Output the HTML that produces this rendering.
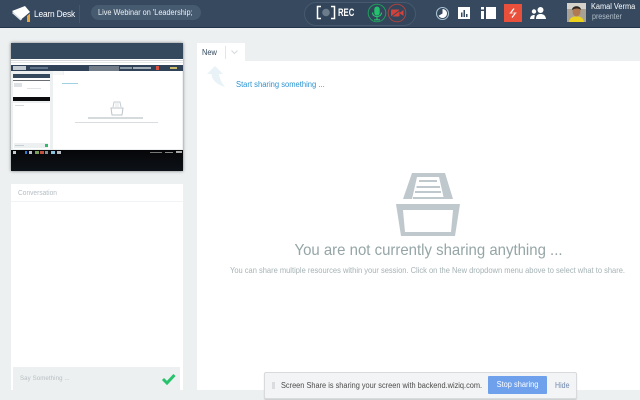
<!DOCTYPE html>
<html><head><meta charset="utf-8">
<style>
html,body{margin:0;padding:0;width:640px;height:400px;overflow:hidden;background:#ecf0f1;font-family:"Liberation Sans",sans-serif}
div,svg,span{position:absolute;white-space:nowrap}
.t{transform-origin:0 0}
</style></head><body>
<!-- header -->
<div style="left:0;top:0;width:640px;height:27px;background:#36495f"></div>
<div style="left:0;top:27px;width:640px;height:1px;background:#22344a"></div>
<svg style="left:10px;top:4px" width="24" height="20" viewBox="0 0 24 20"><path d="M2 7L15 2L20 8L11 15.500Z" fill="#fff"/><path d="M2 9L10.500 16.500L12 15.500L3 8Z" fill="#dfe4e8"/><path d="M17 18V12L20 9.500V18Z" fill="#e9a53c"/></svg>
<div class="t" style="left:34px;top:8px;font-size:9px;line-height:12px;color:#fff;letter-spacing:-.2px;transform:scaleX(.93)">Learn Desk</div>
<div style="left:79px;top:5px;width:1px;height:18px;background:#43566b"></div>
<div style="left:91px;top:5px;width:110px;height:15px;border-radius:8px;background:#465a70"></div>
<div class="t" style="left:98px;top:6px;font-size:8px;line-height:13px;color:#eef2f4;transform:scaleX(.916)">Live Webinar on 'Leadership;</div>
<div style="left:304px;top:2px;width:110px;height:22px;border-radius:12px;border:1px solid #46596e;background:#32455a"></div>
<svg style="left:316px;top:5px" width="20" height="15" viewBox="0 0 20 15"><path d="M5 1.500H1.500V13.500H5M15 1.500H18.500V13.500H15" fill="none" stroke="#fff" stroke-width="1.500"/><circle cx="10" cy="7.500" r="3.800" fill="#6d7c8b"/></svg>
<div class="t" style="left:338px;top:6px;font-size:11px;line-height:14px;font-weight:bold;color:#fff;transform:scaleX(.7)">REC</div>
<svg style="left:367px;top:3px" width="20" height="20" viewBox="0 0 20 20"><circle cx="10" cy="10" r="8.800" fill="none" stroke="#1f9d5c" stroke-width="1"/><rect x="7.300" y="3.500" width="5.400" height="9" rx="2.700" fill="#25c06d"/><path d="M5.500 9.500C5.500 15 14.500 15 14.500 9.500M10 14V16.500M7 16.800H13" fill="none" stroke="#25c06d" stroke-width="1.200"/></svg>
<svg style="left:387px;top:3px" width="20" height="20" viewBox="0 0 20 20"><circle cx="10" cy="10" r="8.800" fill="none" stroke="#a8433f" stroke-width="1"/><rect x="4" y="6.500" width="8.500" height="7" rx="1" fill="#d2413a"/><path d="M13 9.500L16.500 7V13L13 10.500Z" fill="#d2413a"/><path d="M4 14L15 5.500" stroke="#36495f" stroke-width="1"/></svg>
<svg style="left:435px;top:6px" width="15" height="15" viewBox="0 0 15 15"><circle cx="7.500" cy="7.500" r="6" fill="none" stroke="#a9c2d2" stroke-width="1.100"/><path d="M7.500 3A4.500 4.500 0 1 1 3.600 9.750L7.500 7.500Z" fill="#fff"/></svg>
<svg style="left:458px;top:7px" width="12" height="12" viewBox="0 0 12 12"><rect width="12" height="12" fill="#fff"/><path d="M3 5.500H4.500V10H3ZM5.500 3H7V10H5.500ZM8 7H9.500V10H8Z" fill="#36495f"/></svg>
<svg style="left:481px;top:7px" width="15" height="12" viewBox="0 0 15 12"><path d="M0 0H3V2.500H0ZM0 4H3V12H0ZM5 0H15V12H5Z" fill="#fff"/></svg>
<div style="left:504px;top:4px;width:18px;height:18px;background:#e8503c"></div>
<svg style="left:504px;top:4px" width="18" height="18" viewBox="0 0 18 18"><path d="M10 4.500L6.500 9H8.200M9.800 9H11.500L8 13.500" fill="none" stroke="#fff" stroke-width="1.200"/><path d="M5.500 9H12.500" stroke="#f7b0a5" stroke-width=".8"/></svg>
<svg style="left:530px;top:7px" width="17" height="12" viewBox="0 0 17 12"><circle cx="10.500" cy="3" r="3" fill="#fff"/><path d="M6 12C6 8 8 7 10.500 7S15.500 8 16 12Z" fill="#fff"/><circle cx="4" cy="4.500" r="2.200" fill="#fff"/><path d="M0 12C.3 9 2 8 4 8L5 8.500C4.500 9.500 4.300 10.500 4.300 12Z" fill="#fff"/></svg>
<svg style="left:567px;top:3px" width="19" height="19" viewBox="0 0 19 19"><rect width="19" height="19" fill="#a9a294"/><rect width="19" height="6" fill="#d5d2cb"/><path d="M2 19C3 14 6 13.500 9.500 13.500S16 14 17 19Z" fill="#ecd21d"/><ellipse cx="9.500" cy="8.500" rx="4" ry="5" fill="#b27a53"/><path d="M5 7C5 2 14 2 14 7C12 5 8 5 5 7Z" fill="#2c2420"/></svg>
<div class="t" style="left:591px;top:2px;font-size:8px;line-height:10px;color:#fff;transform:scaleX(.92)">Kamal Verma</div>
<div class="t" style="left:591.500px;top:11px;font-size:8px;line-height:11px;color:#b3bfca;transform:scaleX(.885)">presenter</div>

<!-- thumbnail -->
<div style="left:11px;top:43px;width:172px;height:128px;background:#fff;box-shadow:0 0 3px rgba(0,0,0,.5)"></div>
<div style="left:11px;top:43px;width:172px;height:16px;background:#34495e"></div>
<div style="left:11px;top:60px;width:172px;height:1px;background:#d4d7da"></div>
<div style="left:11px;top:62px;width:172px;height:1px;background:#e6e8ea"></div>
<div style="left:11px;top:65px;width:172px;height:6px;background:#2f4258"></div>
<div style="left:13px;top:66px;width:13px;height:4px;background:#c4cbd1"></div>
<div style="left:30px;top:67px;width:18px;height:2px;background:#60748a"></div>
<div style="left:89px;top:66px;width:30px;height:5px;background:#717c88"></div>
<div style="left:89px;top:71px;width:22px;height:6px;background:#f1f2f3"></div>
<div style="left:120px;top:67px;width:12px;height:2px;background:#8b98a5"></div>
<div style="left:133px;top:67px;width:18px;height:2px;background:#a3aeb8"></div>
<div style="left:156px;top:66px;width:3px;height:4px;background:#d9503f"></div>
<div style="left:170px;top:67px;width:7px;height:2px;background:#c9b96a"></div>
<div style="left:11px;top:71px;width:172px;height:79px;background:#edf0f1"></div>
<div style="left:53px;top:75px;width:129px;height:74px;background:#fff"></div>
<div style="left:64px;top:71px;width:118px;height:4px;background:#fff"></div>
<div style="left:53px;top:71px;width:10px;height:4px;background:#f6f8f8"></div>
<div style="left:13px;top:74px;width:37px;height:4px;background:#34495e"></div>
<div style="left:13px;top:78px;width:37px;height:23px;background:#fff"></div>
<div style="left:13px;top:80px;width:37px;height:1px;background:#6b6f73"></div>
<div style="left:13px;top:97px;width:37px;height:4px;background:#0c0c0e"></div>
<div style="left:14px;top:83px;width:8px;height:4px;background:#dde1e4"></div>
<div style="left:27px;top:88px;width:14px;height:1px;background:#e2e5e7"></div>
<div style="left:13px;top:103px;width:37px;height:46px;background:#fff"></div>
<div style="left:15px;top:105px;width:9px;height:1px;background:#d6dadd"></div>
<div style="left:14px;top:143px;width:34px;height:5px;background:#edf0f1"></div>
<div style="left:15px;top:145px;width:9px;height:1px;background:#c9ced2"></div>
<div style="left:45px;top:144px;width:3px;height:3px;background:#31b96c"></div>
<div style="left:62px;top:82.500px;width:16px;height:1px;background:#9fd0e4"></div>
<svg style="left:110px;top:101px" width="14" height="15" viewBox="0 0 14 15"><path d="M3 6L4 1H10L11 6" fill="none" stroke="#c6cdd1" stroke-width="1"/><path d="M5 3H9M5 5H9" stroke="#d8dde0" stroke-width=".7"/><path d="M1 7H13L12 14H2Z" fill="none" stroke="#bcc4c9" stroke-width="1"/></svg>
<div style="left:88px;top:117px;width:55px;height:1.500px;background:#d5dadd"></div>
<div style="left:75px;top:121.500px;width:83px;height:1px;background:#d9dde0"></div>
<div style="left:11px;top:150px;width:172px;height:21px;background:linear-gradient(#060608,#0d1218)"></div>
<div style="left:13px;top:151px;width:3px;height:3px;background:#c6cbd0"></div>
<div style="left:25px;top:151px;width:2px;height:3px;background:#2a7bd0"></div>
<div style="left:29px;top:151px;width:3px;height:3px;background:#b8c0c8"></div>
<div style="left:35px;top:151px;width:4px;height:3px;background:#7ba05b"></div>
<div style="left:40px;top:151px;width:4px;height:3px;background:#c0503f"></div>
<div style="left:45px;top:151px;width:3px;height:3px;background:#8a8f94"></div>
<div style="left:51px;top:151px;width:4px;height:3px;background:#8cc0df"></div>
<div style="left:57px;top:151px;width:4px;height:3px;background:#b5bcc2"></div>
<div style="left:150px;top:152px;width:12px;height:1px;background:#777"></div>
<div style="left:165px;top:152px;width:8px;height:1px;background:#888"></div>
<div style="left:176px;top:151px;width:6px;height:2px;background:#aaa"></div>

<!-- conversation -->
<div style="left:11px;top:184px;width:172px;height:206px;background:#fff"></div>
<div style="left:11px;top:201px;width:172px;height:1px;background:#f1f3f4"></div>
<div class="t" style="left:18px;top:187px;font-size:7.200px;line-height:11px;color:#b4bdc3;transform:scaleX(.92)">Conversation</div>
<div style="left:13px;top:367px;width:167px;height:23px;background:#ecf0f1"></div>
<div class="t" style="left:20px;top:374px;font-size:6.600px;line-height:10px;color:#b8bec2;letter-spacing:.1px;transform:scaleX(.925)">Say Something ...</div>
<svg style="left:161px;top:373px" width="15" height="12" viewBox="0 0 15 12"><path d="M2 6L6 10L13.500 2" fill="none" stroke="#27c26c" stroke-width="3"/></svg>

<!-- main -->
<div style="left:197px;top:61px;width:443px;height:329px;background:#fff"></div>
<div style="left:197px;top:43px;width:48px;height:18px;background:#fff"></div>
<div class="t" style="left:202px;top:46px;font-size:8.500px;line-height:12px;color:#34495e;transform:scaleX(.88)">New</div>
<div style="left:224.500px;top:46px;width:1px;height:13px;background:#e3e6e8"></div>
<svg style="left:231px;top:50px" width="7" height="5" viewBox="0 0 7 5"><path d="M.5 .5L3.500 3.500L6.500 .5" fill="none" stroke="#d5dadd" stroke-width="1"/></svg>
<svg style="left:205px;top:64px" width="22" height="24" viewBox="0 0 22 24"><path d="M10 2L2 10H6.500C7 15 10 20 20 23C16 18 14.500 14 14 10H18Z" fill="#e8f2f7"/></svg>
<div class="t" style="left:235.500px;top:79px;font-size:8px;line-height:12px;color:#2a93d1;transform:scaleX(.95)">Start sharing something ...</div>

<svg style="left:394px;top:171px" width="68" height="68" viewBox="0 0 68 68"><path d="M18 2H51L59 28H50L45 6H23L18 28H9Z" fill="#bfc8cc"/><path d="M25 10H43M22.500 16H46M21 21H47M19 27H50" stroke="#bfc8cc" stroke-width="2"/><path fill-rule="evenodd" d="M2 33H66L61 65H7ZM9 39L11 61H57L59 39Z" fill="#bfc8cc"/></svg>
<div style="left:207px;top:241px;width:443px;text-align:center;font-size:16px;line-height:20px;color:#95a5a6;transform:scaleX(.935)">You are not currently sharing anything ...</div>
<div style="left:206px;top:264px;width:443px;text-align:center;font-size:8.300px;line-height:12px;color:#a6b2b5;transform:scaleX(.906)">You can share multiple resources within your session. Click on the New dropdown menu above to select what to share.</div>

<!-- share bar -->
<div style="left:264px;top:372px;width:313px;height:27px;background:#f3f4f5;border:1px solid #d9dadb;box-sizing:border-box;border-radius:2px;box-shadow:0 1px 1px rgba(0,0,0,.15)"></div>
<div style="left:272px;top:382px;width:3px;height:7px;background:#dadcdd"></div>
<div class="t" style="left:281px;top:380px;font-size:7.800px;line-height:12px;color:#4c4c4c;transform:scaleX(.947)">Screen Share is sharing your screen with backend.wiziq.com.</div>
<div style="left:488px;top:376px;width:59px;height:18px;background:#6ea0ec;border-radius:1px"></div>
<div style="left:488px;top:379px;width:59px;text-align:center;font-size:8px;line-height:12px;color:#fff;transform:scaleX(.93)">Stop sharing</div>
<div class="t" style="left:555px;top:380px;font-size:8px;line-height:12px;color:#6f87ac;transform:scaleX(.88)">Hide</div>
</body></html>
